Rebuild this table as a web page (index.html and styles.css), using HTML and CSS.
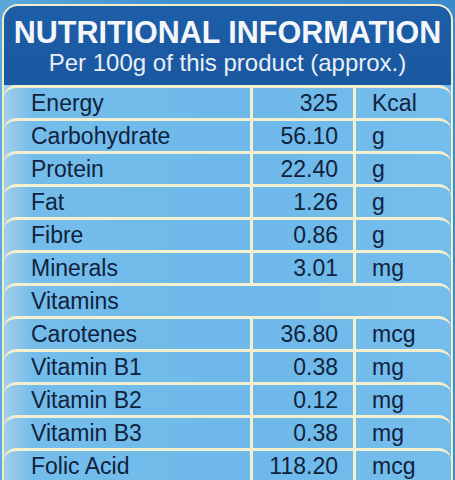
FILE: index.html
```html
<!DOCTYPE html>
<html>
<head>
    <link rel="stylesheet" href="styles.css">
</head>
<body>
    <div class="label-card">
        <div class="label-head">
            <div class="title">NUTRITIONAL INFORMATION</div>
            <div class="subtitle">Per 100g of this product (approx.)</div>
        </div>
        <div class="rows">
            <div class="row"><span class="name">Energy</span><span class="value">325</span><span class="unit">Kcal</span></div>
            <div class="row"><span class="name">Carbohydrate</span><span class="value">56.10</span><span class="unit">g</span></div>
            <div class="row"><span class="name">Protein</span><span class="value">22.40</span><span class="unit">g</span></div>
            <div class="row"><span class="name">Fat</span><span class="value">1.26</span><span class="unit">g</span></div>
            <div class="row"><span class="name">Fibre</span><span class="value">0.86</span><span class="unit">g</span></div>
            <div class="row"><span class="name">Minerals</span><span class="value">3.01</span><span class="unit">mg</span></div>
            <!-- section row, no value columns -->
            <div class="row section"><span class="name">Vitamins</span></div>
            <div class="row"><span class="name">Carotenes</span><span class="value">36.80</span><span class="unit">mcg</span></div>
            <div class="row"><span class="name">Vitamin B1</span><span class="value">0.38</span><span class="unit">mg</span></div>
            <div class="row"><span class="name">Vitamin B2</span><span class="value">0.12</span><span class="unit">mg</span></div>
            <div class="row"><span class="name">Vitamin B3</span><span class="value">0.38</span><span class="unit">mg</span></div>
            <div class="row"><span class="name">Folic Acid</span><span class="value">118.20</span><span class="unit">mcg</span></div>
        </div>
    </div>
</body>
</html>
```

FILE: styles.css
```css
body {
    margin: 0;
    width: 455px;
    height: 480px;
    overflow: hidden;
    background: linear-gradient(to right, #5aa9dc, #3d8fd0 40%, #3b8acb);
    font-family: "Liberation Sans", Arial, sans-serif;
}
.label-card {
    margin: 4px 2px 0 2px;
    border: 2px solid #f3eec8;
    border-bottom: none;
    border-radius: 16px 16px 0 0;
    overflow: hidden;
    background: #f3eec8;
}
.label-head {
    background: linear-gradient(to bottom, #1d5ea8, #1a58a0);
    text-align: center;
    padding: 9px 0;
}
.title {
    font-size: 30.5px;
    font-weight: bold;
    line-height: 34px;
    color: #f4f6fa;
}
.subtitle {
    font-size: 24px;
    line-height: 27px;
    color: #e9eff7;
}
.rows {
    background: linear-gradient(to right, #a6d0ea 0, #73bdeb 30px, #6cb9ea 100%);
}
.row {
    display: grid;
    grid-template-columns: 246px 103px 1fr;
    height: 30px;
    border-top: 3px solid #f4efcf;
    border-radius: 12px 12px 0 0;
    background: linear-gradient(to right, #a2cee9 0, #74bdeb 28px, #6eb9ea 55%, #75bdec 100%);
    color: #10223c;
    font-size: 23px;
    line-height: 30px;
}
.row.section {
    grid-template-columns: 1fr;
}
.name {
    padding-left: 27px;
}
.value {
    border-left: 3px solid #f4efcf;
    text-align: right;
    padding-right: 15px;
}
.unit {
    border-left: 3px solid #f4efcf;
    padding-left: 16px;
}
```
